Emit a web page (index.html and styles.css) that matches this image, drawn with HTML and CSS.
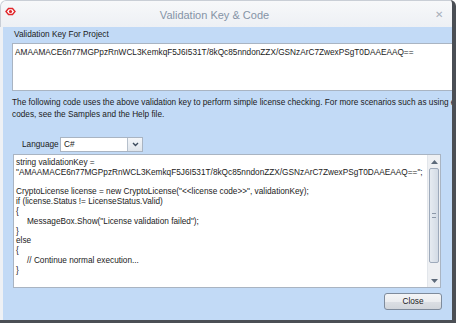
FILE: index.html
```html
<!DOCTYPE html>
<html>
<head>
<meta charset="utf-8">
<title>Validation Key &amp; Code</title>
<link rel="stylesheet" href="styles.css">
</head>
<body>
<div class="window">
  <div class="titlebar">
    <svg class="appicon" width="11" height="9" viewBox="0 0 11 9">
      <path d="M1 4.5 L3.5 1.5 H7.5 L10 4.5 L7.5 7.5 H3.5 Z" fill="#fff" stroke="#e0262b" stroke-width="1.4"/>
      <circle cx="5.5" cy="4.5" r="1.6" fill="#e0262b"/>
    </svg>
    <div class="title">Validation Key &amp; Code</div>
    <div class="closex">✕</div>
  </div>
  <div class="client">
    <div class="label">Validation Key For Project</div>
    <div class="keybox">AMAAMACE6n77MGPpzRnWCL3KemkqF5J6I531T/8kQc85nndonZZX/GSNzArC7ZwexPSgT0DAAEAAQ==</div>
    <div class="desc">
      <div class="line">The following code uses the above validation key to perform simple license checking. For more scenarios such as using en</div>
      <div class="line">codes, see the Samples and the Help file.</div>
    </div>
    <div class="langrow">
      <span class="langlabel">Language</span>
      <div class="combo">
        <span class="comboval">C#</span>
        <span class="combobtn">
          <svg width="7" height="5" viewBox="0 0 7 5"><path d="M1 1 L3.5 3.5 L6 1" fill="none" stroke="#3c4a5c" stroke-width="1.4"/></svg>
        </span>
      </div>
    </div>
    <div class="codebox">
      <div class="code">
        <div>string validationKey =</div>
        <div>"AMAAMACE6n77MGPpzRnWCL3KemkqF5J6I531T/8kQc85nndonZZX/GSNzArC7ZwexPSgT0DAAEAAQ==";</div>
        <div>&nbsp;</div>
        <div>CryptoLicense license = new CryptoLicense("&lt;&lt;license code&gt;&gt;", validationKey);</div>
        <div>if (license.Status != LicenseStatus.Valid)</div>
        <div>{</div>
        <div class="ind">MessageBox.Show("License validation failed");</div>
        <div>}</div>
        <div>else</div>
        <div>{</div>
        <div class="ind">// Continue normal execution...</div>
        <div>}</div>
      </div>
      <div class="scrollbar">
        <div class="sbarrow"><svg width="7" height="4" viewBox="0 0 7 4"><path d="M0 4 L3.5 0 L7 4 Z" fill="#5d6a7a"/></svg></div>
        <div class="sbtrack"><div class="thumb"><div class="grip"></div></div></div>
        <div class="sbarrow"><svg width="7" height="4" viewBox="0 0 7 4"><path d="M0 0 L3.5 4 L7 0 Z" fill="#5d6a7a"/></svg></div>
      </div>
    </div>
    <div class="btnrow">
      <div class="button">Close</div>
    </div>
  </div>
</div>
</body>
</html>
```

FILE: styles.css
```css
html, body {
  margin: 0;
  padding: 0;
  background: #ffffff;
}
body {
  font-family: "Liberation Sans", Arial, sans-serif;
  font-size: 8.25px;
  color: #1b1b1b;
  width: 460px;
  height: 327px;
  overflow: hidden;
}
.window {
  width: 452px;
  height: 320px;
  border-right: 4px solid #4b4f55;
  border-bottom: 3px solid #4b4f55;
  border-top-left-radius: 6px;
  border-top-right-radius: 6px;
  display: flex;
  flex-direction: column;
  overflow: hidden;
  background: #eef1f5;
}
.titlebar {
  height: 27px;
  flex: none;
  display: flex;
  align-items: center;
  background: linear-gradient(#f7f8fa, #edf0f4);
  border-top: 1px solid #c9ced6;
  border-left: 1px solid #c9ced6;
  border-top-left-radius: 6px;
  box-sizing: border-box;
}
.appicon {
  margin-left: 4px;
  margin-top: -5px;
}
.title {
  flex: 1;
  text-align: center;
  font-size: 11px;
  color: #8593a6;
  margin-left: -15px;
  margin-top: 1px;
}
.closex {
  width: 22px;
  text-align: center;
  color: #a7afba;
  font-size: 10px;
  margin-right: 2px;
}
.client {
  flex: 1;
  margin-left: 3px;
  background: #c2daf6;
  padding: 3px 0 0 9px;
  display: flex;
  flex-direction: column;
  overflow: hidden;
}
.label {
  line-height: 10px;
  height: 10px;
  padding-left: 2px;
}
.keybox {
  margin-top: 3px;
  margin-right: -4px;
  height: 48px;
  box-sizing: border-box;
  background: #ffffff;
  border: 1px solid #a9b4c2;
  padding: 4px 0 0 2px;
  line-height: 10px;
  white-space: nowrap;
}
.desc {
  margin-top: 6px;
  white-space: nowrap;
}
.desc .line {
  line-height: 12px;
  height: 12px;
}
.langrow {
  margin-top: 15px;
  display: flex;
  align-items: center;
  height: 16px;
}
.langlabel {
  margin-left: 10px;
  width: 38px;
}
.combo {
  width: 83px;
  height: 15px;
  box-sizing: border-box;
  border: 1px solid #a9b4c2;
  background: #ffffff;
  display: flex;
  align-items: stretch;
}
.comboval {
  flex: 1;
  padding-left: 3px;
  line-height: 13px;
}
.combobtn {
  width: 14px;
  border-left: 1px solid #b6c0cc;
  background: linear-gradient(#f4f6f9, #dfe5ec);
  display: flex;
  align-items: center;
  justify-content: center;
}
.codebox {
  margin-top: 2px;
  margin-left: 1px;
  width: 428px;
  height: 134px;
  box-sizing: border-box;
  border: 1px solid #a9b4c2;
  background: #ffffff;
  display: flex;
}
.code {
  flex: 1;
  padding: 3px 0 0 2px;
  line-height: 9.8px;
  white-space: nowrap;
  overflow: hidden;
}
.code .ind {
  padding-left: 11px;
}
.scrollbar {
  width: 12px;
  flex: none;
  background: #eef0f3;
  border-left: 1px solid #e2e6eb;
  display: flex;
  flex-direction: column;
}
.sbarrow {
  height: 13px;
  display: flex;
  align-items: center;
  justify-content: center;
}
.sbtrack {
  flex: 1;
  padding: 0 1px;
  display: flex;
  flex-direction: column;
}
.thumb {
  height: 95px;
  box-sizing: border-box;
  border: 1px solid #9eaabb;
  border-radius: 2px;
  background: linear-gradient(90deg, #e6ebf1, #d3dbe5);
  display: flex;
  align-items: center;
  justify-content: center;
}
.grip {
  width: 4px;
  height: 5px;
  border-top: 1px solid #8c98a8;
  border-bottom: 1px solid #8c98a8;
  box-sizing: border-box;
}
.btnrow {
  margin-top: 5px;
  display: flex;
  justify-content: flex-end;
  padding-right: 10px;
}
.button {
  width: 58px;
  height: 17px;
  box-sizing: border-box;
  border: 1px solid #7e8b9c;
  border-radius: 3px;
  background: linear-gradient(#f4f5f7 0%, #ebedf0 50%, #dcdfe4 51%, #d1d5db 100%);
  text-align: center;
  line-height: 15px;
}
```
